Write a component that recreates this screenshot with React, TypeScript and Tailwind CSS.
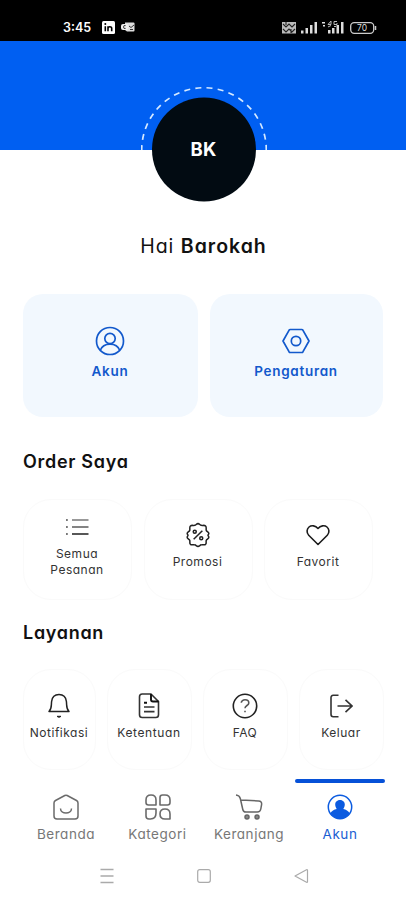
import React from "react";

interface TileProps {
  label: React.ReactNode;
  className: string;
  labelClass?: string;
  children: React.ReactNode;
}

const Tile: React.FC<TileProps> = ({ label, className, labelClass = "tracking-[0.5px]", children }) => {
  return (
    <div
      className={`flex shrink-0 flex-col items-center h-[101px] rounded-[28px] border border-[#fafafa] bg-white pr-px text-[12px] leading-4 text-[#333] ${className}`}
    >
      {children}
      <span className={`text-center whitespace-nowrap ${labelClass}`}>{label}</span>
    </div>
  );
};

const StatusBar: React.FC = () => (
  <div className="flex h-[41px] items-start bg-black pt-[20px] text-white">
    <span className="ml-[63px] w-[39px] text-[12.5px] font-semibold leading-[15px]">3:45</span>
    <svg width="13" height="13" viewBox="0 0 13 13" className="mt-[1px]">
      <rect width="13" height="13" rx="1.5" fill="#fff" />
      <path d="M3.3 5.3v5M6 10.3v-5M6 7.5c0-2.2 3.7-2.6 3.7 0v2.8" stroke="#000" strokeWidth="1.6" fill="none" />
      <circle cx="3.3" cy="3.1" r="1" fill="#000" />
    </svg>
    <svg width="14" height="12" viewBox="0 0 14 12" className="ml-[6px] mt-[1px]">
      <path d="M4 1.5h8.5q1 0 1 1v7q0 1-1 1H6L4 9z" fill="#ddd" />
      <rect x="0" y="3" width="7.5" height="6" rx="2" fill="#eee" />
      <path d="M4.6 4.6a1.5 1.5 0 1 0 0 2.8M8 5l2 1.5L13 4M9 8.5h3" stroke="#333" fill="none" />
    </svg>
    <svg width="98" height="15" viewBox="0 0 98 15" className="ml-[146px]">
      <rect x="1" y="2" width="14" height="11.500" fill="#bbb" />
      <path d="M2 4l3 3 3-3 3 3 3-3M2 9l3 3 3-3 3 3 3-3M5 2v3M10 9v4" stroke="#222" strokeWidth="1.1" fill="none" />
      <g fill="#ddd">
        <rect x="20" y="10.500" width="2.500" height="3" />
        <rect x="24.500" y="8" width="2.500" height="5.500" />
        <rect x="29" y="5" width="2.500" height="8.500" />
        <rect x="33.500" y="2" width="2.500" height="11.500" />
        <rect x="41" y="2" width="3" height="1.500" />
        <rect x="42" y="5" width="2" height="1.500" />
        <rect x="47" y="10" width="2.500" height="3.500" />
        <rect x="51" y="8" width="2.500" height="5.500" />
        <rect x="55.500" y="5" width="2.500" height="8.500" />
        <rect x="60" y="2" width="2.500" height="11.500" />
      </g>
      <path d="M47 4.500h3V1M47 4.500L50 1M56 1.500h-3v3h3V3M47 7l3-1.500M53 6.500h2" stroke="#bbb" fill="none" />
      <rect x="69.700" y="2.700" width="23" height="10.600" rx="3.500" fill="none" stroke="#ccc" strokeWidth="1.300" />
      <path d="M94.500 6v4" stroke="#ccc" strokeWidth="1.500" />
      <text x="81" y="11.200" textAnchor="middle" fontSize="8.500" fontFamily="Inter, sans-serif" fill="#ddd">
        70
      </text>
    </svg>
  </div>
);

const ListIcon = () => (
  <svg width="24" height="18" viewBox="0 0 24 18" className="mt-[18px] mb-[10px]" fill="none">
    <path d="M7 2h16.500" stroke="#999" strokeWidth="2" />
    <path d="M7 9h16.500" stroke="#777" strokeWidth="1.800" />
    <path d="M7 16h16.500" stroke="#444" strokeWidth="1.800" />
    <path d="M1 2h1.800M1 9h1.800M1 16h1.800" stroke="#777" strokeWidth="1.800" />
  </svg>
);

const PromoIcon = () => (
  <svg width="26" height="26" viewBox="0 0 24 24" className="mt-[22px] mb-[6px]" fill="none" stroke="#222" strokeWidth="1.400" strokeLinejoin="round">
    <path d="M12 1.500c1.300 0 1.800 1.300 3 1.600 1.300.3 2.900-.5 4 .6 1.100 1.100.3 2.600.6 3.900.3 1.200 2.400 1.600 2.400 3.100 0 .8-.8 1 -.8 1.600s.8 1 .8 1.800c0 1.500-2 1.700-2.400 2.900-.4 1.300.5 2.500-.6 3.600-1.100 1-2.600.1-4 .5-1.200.3-1.700 1.400-3 1.400s-1.800-1.100-3-1.400c-1.400-.4-2.900.5-4-.5-1.100-1.100-.2-2.300-.6-3.600-.4-1.200-2.400-1.400-2.400-2.900 0-.8.8-1.200.8-1.800s-.8-.8-.8-1.600c0-1.500 2.100-1.900 2.400-3.100.3-1.300-.5-2.800.6-3.900 1.100-1.100 2.700-.3 4-.6 1.200-.3 1.700-1.600 3-1.600z" />
    <path d="M8 16L16 8" />
    <circle cx="9" cy="9" r="1.400" />
    <circle cx="15" cy="15" r="1.400" />
  </svg>
);

const HeartIcon = () => (
  <svg width="24" height="22" viewBox="0 0 24 22" className="mt-[24px] mb-[8px]" fill="none" stroke="#1c1c1c" strokeWidth="1.600" strokeLinejoin="round">
    <path d="M12 20.500L2.700 11.200C.2 8.600.8 4.800 3 3c2.500-2 6.500-1.500 9 1.400C14.500 1.500 18.500 1 21 3c2.200 1.800 2.800 5.600.3 8.200z" />
  </svg>
);

const BellIcon = () => (
  <svg width="24" height="26" viewBox="0 0 24 26" className="mt-[23px] mb-[6px]" fill="none" stroke="#222" strokeWidth="1.500" strokeLinejoin="round">
    <path d="M2 18.500C5 15.500 4.100 12.500 4.600 8.500 5.100 4.200 7.900 1.500 12 1.500s6.900 2.700 7.400 7c.5 4-.4 7 2.600 10z" />
    <path d="M10 23.300c1.200 1.200 2.800 1.200 4 0z" fill="#222" strokeWidth="1" />
  </svg>
);

const DocIcon = () => (
  <svg width="22" height="26" viewBox="0 0 22 26" className="mt-[23px] mb-[6px]" fill="none" stroke="#333" strokeWidth="1.600" strokeLinejoin="round">
    <path d="M13 1H4.200C2.500 1 1.500 2 1.500 3.700v18.100c0 1.700 1 2.700 2.700 2.700h13.600c1.700 0 2.700-1 2.700-2.700V8.500z" />
    <path d="M13 1v5.500c0 1.200.8 2 2 2h5.500M6 9.800h3" stroke="#111" strokeWidth="1.900" />
    <path d="M6 14h10.500M6 18.600h10.500" />
  </svg>
);

const FaqIcon = () => (
  <svg width="26" height="26" viewBox="0 0 26 26" className="mt-[23px] mb-[6px]" fill="none" stroke="#222" strokeWidth="1.600">
    <circle cx="13" cy="13" r="11.700" />
    <path d="M9.300 9.800C9.300 5.800 16.800 5.800 16.800 9.900c0 2.700-3.800 2.500-3.800 5.400M13 17.700v1.600" stroke="#555" />
  </svg>
);

const LogoutIcon = () => (
  <svg width="24" height="26" viewBox="0 0 24 26" className="mt-[23px] mb-[6px]" fill="none" stroke="#333" strokeWidth="1.600">
    <path d="M9.500 2.300H4.200C2.700 2.300 2 3.200 2 4.700v16.600c0 1.500.7 2.400 2.200 2.400h5.300M8.500 13h14.500M16.500 6.800L23 13l-6.500 6.200" />
  </svg>
);

interface NavItemProps {
  label: string;
  className: string;
  children: React.ReactNode;
}

const NavItem: React.FC<NavItemProps> = ({ label, className, children }) => (
  <div className={`flex flex-col items-center pr-px ${className}`}>
    {children}
    <span className="mt-[4px] text-[13.5px] leading-5 tracking-[0.55px] whitespace-nowrap">{label}</span>
  </div>
);

const App: React.FC = () => {
  return (
    <div className="h-[900px] w-[406px] overflow-hidden bg-white font-['Inter',sans-serif] [font-feature-settings:'cv11'] text-[#111]">
      <StatusBar />

      <div className="flex h-[109px] justify-center bg-[#005ff2] pt-[45px] pl-px">
        <div className="relative size-[126px] shrink-0">
          <svg width="126" height="126" viewBox="0 0 126 126">
            <path d="M.7 64a62.300 62.300 0 0 1 124.600 0" fill="none" stroke="#d5e9ff" strokeWidth="1.700" strokeDasharray="6 5.250" strokeDashoffset="1" />
            <circle cx="63" cy="63.500" r="52" fill="#020b12" />
          </svg>
          <span className="absolute inset-0 flex items-center justify-center pt-px text-[18.5px] font-bold tracking-[0.3px] text-white">BK</span>
        </div>
      </div>

      <h1 className="mt-[84px] pl-px text-center text-[19.500px] leading-6 tracking-[1px]">
        Hai <b className="font-semibold">Barokah</b>
      </h1>

      <div className="mt-[36px] flex gap-[12px] pl-[23px] text-[13.5px] font-semibold leading-5 tracking-[0.7px] text-[#1259cc]">
        <div className="flex h-[123px] w-[175px] flex-col items-center rounded-[20px] bg-[#f2f8fe] pt-[32px] pr-px">
          <svg width="30" height="30" viewBox="0 0 30 30" fill="none" stroke="#1259cc" strokeWidth="1.700">
            <circle cx="15" cy="15" r="13.500" />
            <circle cx="15" cy="12.500" r="5.200" />
            <path d="M5.300 24.300c3-8.300 16.400-8.300 19.400 0" />
          </svg>
          <span className="mt-[5px]">Akun</span>
        </div>
        <div className="flex h-[123px] w-[173px] flex-col items-center rounded-[20px] bg-[#f2f8fe] pt-[32px] pr-px">
          <svg width="30" height="30" viewBox="0 0 30 30" fill="none" stroke="#1259cc" strokeWidth="1.700" strokeLinejoin="round">
            <path d="M9.300 3.500h11.400c.6 0 1 .3 1.300.8L28 15l-6 10.700c-.3.500-.7.800-1.300.8H9.300c-.6 0-1-.3-1.300-.8L2 15 8 4.300c.3-.5.7-.8 1.300-.8z" />
            <circle cx="15" cy="15" r="4.700" />
          </svg>
          <span className="mt-[5px]">Pengaturan</span>
        </div>
      </div>

      <h2 className="mt-[33px] pl-[23px] text-[18px] font-semibold leading-6 tracking-[0.7px]">Order Saya</h2>
      <div className="mt-[25px] flex gap-[11.500px] pl-[23px]">
        <Tile className="w-[109px]" label={<>Semua<br />Pesanan</>}>
          <ListIcon />
        </Tile>
        <Tile className="w-[109px]" label="Promosi">
          <PromoIcon />
        </Tile>
        <Tile className="w-[109px]" label="Favorit">
          <HeartIcon />
        </Tile>
      </div>

      <h2 className="mt-[21px] pl-[23px] text-[18px] font-semibold leading-6 tracking-[0.7px]">Layanan</h2>
      <div className="mt-[24px] flex gap-[11px] pl-[23px]">
        <Tile className="w-[73px]" label="Notifikasi">
          <BellIcon />
        </Tile>
        <Tile className="w-[85px]" label="Ketentuan" labelClass="tracking-[0.6px]">
          <DocIcon />
        </Tile>
        <Tile className="w-[85px]" label="FAQ">
          <FaqIcon />
        </Tile>
        <Tile className="w-[85px]" label="Keluar">
          <LogoutIcon />
        </Tile>
      </div>

      <nav className="mt-[9px] flex pl-[21px] text-[#777]">
        <NavItem label="Beranda" className="w-[91px] pt-[15px]">
          <svg width="28" height="26" viewBox="0 0 28 26" fill="none" stroke="#6b6b6b" strokeWidth="1.500" strokeLinejoin="round">
            <path d="M3.500 6.500L12.800 1.500q1.200-.6 2.400 0l9.300 5q1.500.8 1.500 2.500v13q0 3-3 3H5q-3 0-3-3V9q0-1.700 1.500-2.500z" />
            <path d="M8.500 14.500c0 6 11 6 11 0" />
          </svg>
        </NavItem>
        <NavItem label="Kategori" className="w-[92px] pt-[15px]">
          <svg width="26" height="26" viewBox="0 0 26 26" fill="none" stroke="#6b6b6b" strokeWidth="1.600" strokeLinejoin="round">
            <path d="M1 6Q1 1 6 1t5 5v5H3.500Q1 11 1 8.500zM15 11V3.500Q15 1 17.500 1H20q5 0 5 5v2.500Q25 11 22.500 11zM1 15h10v4q0 6-5.500 6H4q-3 0-3-3zM25 25h-5q-5 0-5-5t5-5 5 5z" />
          </svg>
        </NavItem>
        <NavItem label="Keranjang" className="w-[91px] pt-[15px]">
          <svg width="28" height="26" viewBox="0 0 28 26" fill="none" stroke="#666" strokeWidth="1.500" strokeLinejoin="round">
            <path d="M1 1q3.500.3 4.300 3.500l2.500 11q.5 2.500 3 2.500h11.500q3 0 3.500-3l.8-4.500q.4-3.300-3-3.500L6 6" />
            <circle cx="12" cy="23" r="2" fill="#888" />
            <circle cx="22" cy="23" r="2" fill="#888" />
          </svg>
        </NavItem>
        <div className="flex w-[90px] flex-col">
          <div className="h-[4px] rounded-full bg-[#0651d8]" />
          <NavItem label="Akun" className="w-[91px] pt-[11px] text-[#1a5ed2]">
            <svg width="26" height="26" viewBox="0 0 26 26">
              <circle cx="13" cy="13" r="11.700" fill="#fff" stroke="#0b5be0" strokeWidth="1.500" />
              <path d="M8.200 10.500c0-6 9.600-6 9.600 0 0 2-.8 3-1.500 4.500 2.500.6 5.200 2 6.500 4.500-4.500 7-15.100 7-19.600 0 1.300-2.500 4-3.900 6.500-4.500-.7-1.500-1.500-2.500-1.500-4.500z" fill="#0b5be0" />
            </svg>
          </NavItem>
        </div>
      </nav>

      <div className="mt-[24px] flex items-center gap-[83px] pl-[100px]">
        <svg width="14" height="16" viewBox="0 0 14 16" stroke="#aaa" strokeWidth="1.400">
          <path d="M.5 1.500h13M.5 8h13M.5 14.500h13" />
        </svg>
        <svg width="14" height="16" viewBox="0 0 14 16" fill="none" stroke="#aaa" strokeWidth="1.200">
          <rect x=".7" y="1.700" width="12.600" height="12.600" rx="2" />
        </svg>
        <svg width="15" height="16" viewBox="0 0 15 16" fill="none" stroke="#aaa" strokeWidth="1.200" strokeLinejoin="round">
          <path d="M1 8l11.500-6.300q1-.4 1 .7v11.200q0 1.100-1 .7z" />
        </svg>
      </div>
    </div>
  );
};

export default App;
